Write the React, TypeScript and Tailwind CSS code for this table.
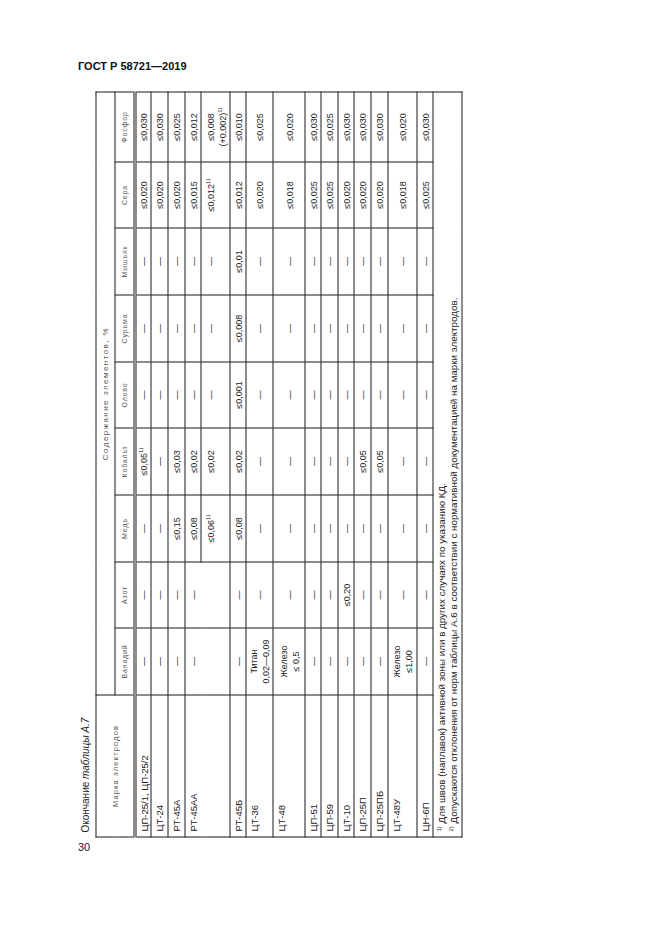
import React from "react";

const D = "—";

function S({ n }: { n: string }) {
  return <sup className="text-[6px] top-[-0.6em]">{n})</sup>;
}

type Row = {
  mark: string;
  h: string;
  cells: React.ReactNode[];
};

const rowsTop: Row[] = [
  {
    mark: "ЦП-25/1, ЦП-25/2",
    h: "h-[16px]",
    cells: [D, D, D, <>≤0,05<S n="1" /></>, D, D, D, "≤0,020", "≤0,030"],
  },
  { mark: "ЦТ-24", h: "h-[17px]", cells: [D, D, D, D, D, D, D, "≤0,020", "≤0,030"] },
  { mark: "РТ-45А", h: "h-[17px]", cells: [D, D, "≤0,15", "≤0,03", D, D, D, "≤0,020", "≤0,025"] },
];

const rowsBottom: Row[] = [
  {
    mark: "РТ-45Б",
    h: "h-[16px]",
    cells: [D, D, "≤0,08", "≤0,02", "≤0,001", "≤0,008", "≤0,01", "≤0,012", "≤0,010"],
  },
  {
    mark: "ЦТ-36",
    h: "h-[27px]",
    cells: [
      <>Титан<br />0,02—0,09</>,
      D, D, D, D, D, D, "≤0,020", "≤0,025",
    ],
  },
  {
    mark: "ЦТ-48",
    h: "h-[32px]",
    cells: [<>Железо<br />≤ 0,5</>, D, D, D, D, D, D, "≤0,018", "≤0,020"],
  },
  { mark: "ЦП-51", h: "h-[16px]", cells: [D, D, D, D, D, D, D, "≤0,025", "≤0,030"] },
  { mark: "ЦП-59", h: "h-[17px]", cells: [D, D, D, D, D, D, D, "≤0,025", "≤0,025"] },
  { mark: "ЦТ-10", h: "h-[16px]", cells: [D, "≤0,20", D, D, D, D, D, "≤0,020", "≤0,030"] },
  { mark: "ЦП-25П", h: "h-[17px]", cells: [D, D, D, "≤0,05", D, D, D, "≤0,020", "≤0,030"] },
  { mark: "ЦП-25ПБ", h: "h-[17px]", cells: [D, D, D, "≤0,05", D, D, D, "≤0,020", "≤0,030"] },
  {
    mark: "ЦТ-48У",
    h: "h-[29px]",
    cells: [<>Железо<br />≤1,00</>, D, D, D, D, D, D, "≤0,018", "≤0,020"],
  },
  { mark: "ЦН-6П", h: "h-[16px]", cells: [D, D, D, D, D, D, D, "≤0,025", "≤0,030"] },
];

const cellCls = "border border-[#1a1a1a] p-0 text-center align-middle leading-[12px]";
const markCls = "border border-[#1a1a1a] p-0 pl-[5px] pt-[2px] text-left align-top leading-[12px] text-[9.5px]";
const headCls = "border border-[#1a1a1a] p-0 text-center align-middle font-normal text-[7px] tracking-[0.12em] text-[#555]";

function BodyRow({ row }: { row: Row }) {
  return (
    <tr className={row.h}>
      <td className={markCls}>{row.mark}</td>
      {row.cells.map((c, i) => (
        <td key={i} className={cellCls}>
          {c}
        </td>
      ))}
    </tr>
  );
}

export default function App() {
  const heads = ["Ванадий", "Азот", "Медь", "Кобальт", "Олово", "Сурьма", "Мышьяк", "Сера", "Фосфор"];
  return (
    <div className="w-[661px] min-h-[935px] bg-white pl-[74px] pt-[59px] text-[#222] font-['Liberation_Sans',Arial,sans-serif]">
      <div className="pl-[4px] text-[11px] font-bold leading-[14px] text-[#111]">ГОСТ Р 58721—2019</div>

      {/* table is printed turned a quarter turn, so it is drawn upright and rotated */}
      <div className="relative mt-[19px] h-[745px] w-[389px]">
        <div className="absolute left-1/2 top-1/2 h-[389px] w-[745px] -translate-x-1/2 -translate-y-1/2 -rotate-90">
          <div className="h-[21px] pl-[5px] text-[10px] leading-[21px]">
            Окончание <i>таблицы А.7</i>
          </div>
          <table className="w-[745px] table-fixed border-collapse text-[9px]">
            <colgroup>
              <col className="w-[142px]" />
              <col className="w-[67px]" />
              <col className="w-[66px]" />
              <col className="w-[67px]" />
              <col className="w-[67px]" />
              <col className="w-[66px]" />
              <col className="w-[67px]" />
              <col className="w-[67px]" />
              <col className="w-[66px]" />
              <col className="w-[70px]" />
            </colgroup>
            <thead>
              <tr className="h-[19px]">
                <th
                  rowSpan={2}
                  className="border border-b-[3px] border-double border-[#1a1a1a] p-0 text-center align-middle font-normal text-[7.5px] tracking-[0.15em] text-[#555]"
                >
                  Марка электродов
                </th>
                <th
                  colSpan={9}
                  className="border border-[#1a1a1a] p-0 text-center align-middle font-normal text-[8px] tracking-[0.18em] text-[#555]"
                >
                  Содержание элементов, %
                </th>
              </tr>
              <tr className="h-[20px]">
                {heads.map((h) => (
                  <th key={h} className={headCls + " border-b-[3px] border-double"}>
                    {h}
                  </th>
                ))}
              </tr>
            </thead>
            <tbody>
              {rowsTop.map((r) => (
                <BodyRow key={r.mark} row={r} />
              ))}
              <tr className="h-[16px]">
                <td rowSpan={2} className={markCls}>
                  РТ-45АА
                </td>
                <td rowSpan={2} className={cellCls + " align-top pt-[2px]"}>
                  {D}
                </td>
                <td rowSpan={2} className={cellCls + " align-top pt-[2px]"}>
                  {D}
                </td>
                <td className={cellCls}>≤0,08</td>
                <td className={cellCls}>≤0,02</td>
                <td className={cellCls}>{D}</td>
                <td className={cellCls}>{D}</td>
                <td className={cellCls}>{D}</td>
                <td className={cellCls}>≤0,015</td>
                <td className={cellCls}>≤0,012</td>
              </tr>
              <tr className="h-[29px]">
                <td className={cellCls + " align-top pt-[3px]"}>
                  ≤0,06<S n="1" />
                </td>
                <td className={cellCls + " align-top pt-[3px]"}>≤0,02</td>
                <td className={cellCls + " align-top pt-[3px]"}>{D}</td>
                <td className={cellCls + " align-top pt-[3px]"}>{D}</td>
                <td className={cellCls + " align-top pt-[3px]"}>{D}</td>
                <td className={cellCls + " align-top pt-[3px]"}>
                  ≤0,012<S n="1" />
                </td>
                <td className={cellCls + " align-top pt-[3px]"}>
                  ≤0,008
                  <br />
                  (+0,002)<S n="1" />
                </td>
              </tr>
              {rowsBottom.map((r) => (
                <BodyRow key={r.mark} row={r} />
              ))}
              <tr className="h-[29px]">
                <td
                  colSpan={10}
                  className="border border-[#1a1a1a] p-0 pl-[5px] pt-[2px] text-left align-top text-[9.8px] leading-[12px]"
                >
                  <div>
                    <S n="1" /> Для швов (наплавок) активной зоны или в других случаях по указанию КД.
                  </div>
                  <div>
                    <S n="2" /> Допускаются отклонения от норм таблицы А.6 в соответствии с нормативной документацией на марки электродов.
                  </div>
                </td>
              </tr>
            </tbody>
          </table>
        </div>
      </div>

      <div className="mt-[4px] pl-[4px] text-[11px] leading-[13px]">30</div>
    </div>
  );
}
